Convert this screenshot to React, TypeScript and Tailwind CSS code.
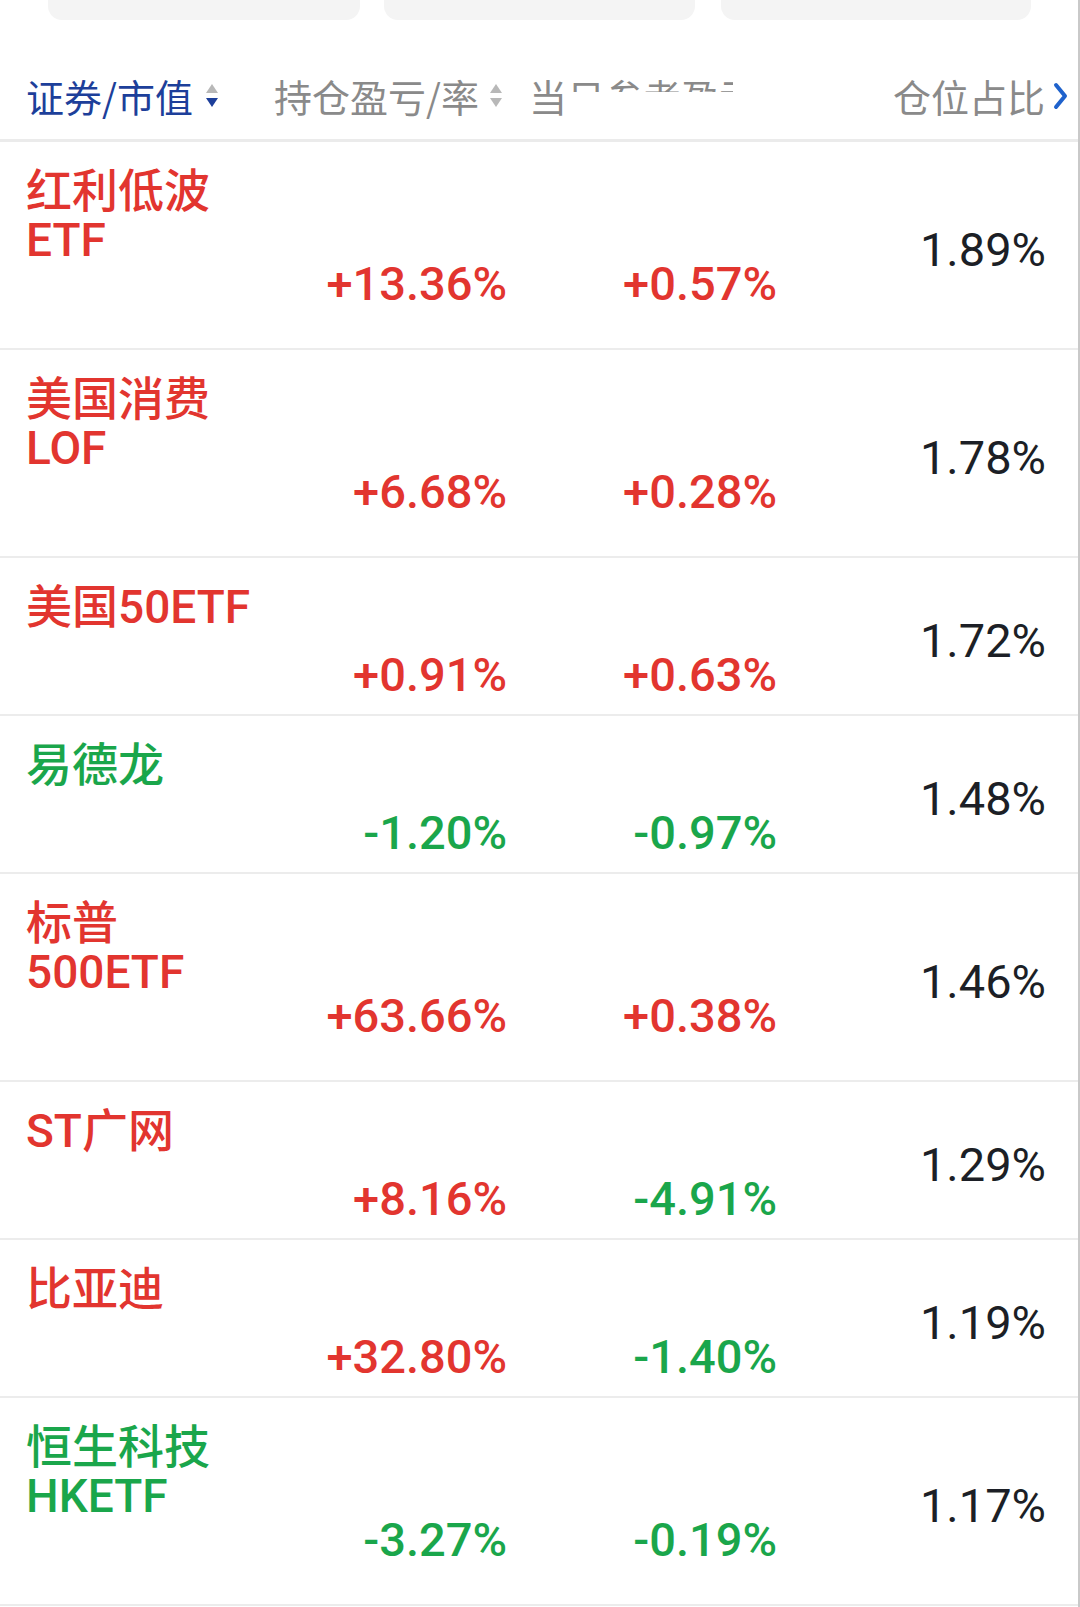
import React from 'react';

type Row = {
  name: string[];
  nc: 'r' | 'g';
  a: string;
  ac: 'r' | 'g';
  b: string;
  bc: 'r' | 'g';
  p: string;
};

const rows: Row[] = [
  { name: ['红利低波', 'ETF'], nc: 'r', a: '+13.36%', ac: 'r', b: '+0.57%', bc: 'r', p: '1.89%' },
  { name: ['美国消费', 'LOF'], nc: 'r', a: '+6.68%', ac: 'r', b: '+0.28%', bc: 'r', p: '1.78%' },
  { name: ['美国50ETF'], nc: 'r', a: '+0.91%', ac: 'r', b: '+0.63%', bc: 'r', p: '1.72%' },
  { name: ['易德龙'], nc: 'g', a: '-1.20%', ac: 'g', b: '-0.97%', bc: 'g', p: '1.48%' },
  { name: ['标普', '500ETF'], nc: 'r', a: '+63.66%', ac: 'r', b: '+0.38%', bc: 'r', p: '1.46%' },
  { name: ['ST广网'], nc: 'r', a: '+8.16%', ac: 'r', b: '-4.91%', bc: 'g', p: '1.29%' },
  { name: ['比亚迪'], nc: 'r', a: '+32.80%', ac: 'r', b: '-1.40%', bc: 'g', p: '1.19%' },
  { name: ['恒生科技', 'HKETF'], nc: 'g', a: '-3.27%', ac: 'g', b: '-0.19%', bc: 'g', p: '1.17%' },
];

const color = (c: 'r' | 'g') => (c === 'r' ? 'text-[#e2352f]' : 'text-[#1aa64b]');

function SortIcon({ active }: { active?: boolean }) {
  return (
    <svg width="14" height="28" viewBox="0 0 14 28" className="shrink-0">
      <polygon points="1,11 7,2 13,11" fill="#b8b8b8" />
      <polygon points="1,16 13,16 7,25" fill={active ? '#1d3f9a' : '#b8b8b8'} />
    </svg>
  );
}

export default function App() {
  return (
    <div className="w-[1080px] min-h-[1607px] bg-white border-r-2 border-[#c9c9c9] font-['Roboto','Noto_Sans_CJK_SC',sans-serif] overflow-hidden">
      {/* top tabs (cropped) */}
      <div className="flex h-[20px] pl-[48px]">
        <div className="w-[312px] h-[20px] rounded-b-[14px] bg-[#f4f4f4]" />
        <div className="w-[311px] h-[20px] rounded-b-[14px] bg-[#f4f4f4] ml-[24px]" />
        <div className="w-[310px] h-[20px] rounded-b-[14px] bg-[#f4f4f4] ml-[26px]" />
      </div>

      {/* header */}
      <div className="relative flex items-center h-[122px] pt-[32px] border-b-[3px] border-[#ebebeb] font-['Noto_Sans_CJK_SC',sans-serif] text-[38px] leading-[40px] text-[#8a8a8a]">
        <div className="flex items-center pl-[26px] w-[274px]">
          <span className="text-[#1d3f9a]">证券/市值</span>
          <span className="ml-[12px]"><SortIcon active /></span>
        </div>
        <div className="flex items-center w-[255px]">
          <span>持仓盈亏/率</span>
          <span className="ml-[10px]"><SortIcon /></span>
        </div>
        <div className="flex items-center w-[364px] overflow-hidden whitespace-nowrap">
          <span>当日参考盈亏/率</span>
        </div>
        <div className="flex items-center">
          <span>仓位占比</span>
          <svg width="18" height="28" viewBox="0 0 18 28" className="ml-[6px]">
            <polyline points="5,3 14,14 5,25" fill="none" stroke="#1f62cc" strokeWidth="4" strokeLinecap="round" strokeLinejoin="round" />
          </svg>
        </div>
        {/* erased parts of the header */}
        <div className="absolute left-[572px] top-[72px] w-[240px] h-[44px] bg-white" />
        <div className="absolute left-[733px] top-[40px] w-[80px] h-[40px] bg-white" />
      </div>

      {/* rows */}
      {rows.map((r, i) => (
        <div key={i} className="flex border-b-2 border-[#ececec]">
          <div className={`w-[300px] pl-[26px] pt-[25px] ${r.name.length > 1 ? 'pb-[34px]' : 'pb-[33px]'} flex flex-col text-[46px] leading-[49px] font-medium ${color(r.nc)}`}>
            {r.name.map((n, j) => (
              <div key={j} className="whitespace-nowrap">{n}</div>
            ))}
            <div className="h-[49px]" />
          </div>
          <div className={`w-[207px] flex flex-col justify-center items-end text-[47px] leading-[49px] font-medium ${color(r.ac)}`}>
            <div className="h-[76px]" />
            <div>{r.a}</div>
          </div>
          <div className={`w-[270px] flex flex-col justify-center items-end text-[47px] leading-[49px] font-medium ${color(r.bc)}`}>
            <div className="h-[76px]" />
            <div>{r.b}</div>
          </div>
          <div className="w-[269px] flex items-center justify-end pt-2 text-[47px] leading-[49px] text-[#1c1f26]">
            {r.p}
          </div>
        </div>
      ))}
    </div>
  );
}
